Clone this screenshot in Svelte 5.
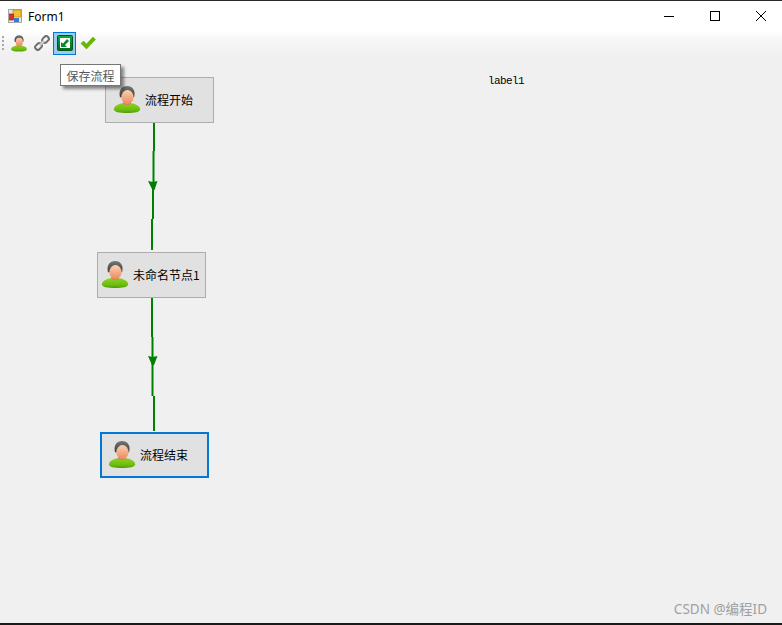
<script>
    const nodes = [
        { label: "流程开始", x: 105, y: 22, w: 109, h: 46, px: 6, gap: 3 },
        { label: "未命名节点1", x: 97, y: 197, w: 109, h: 46, px: 2, gap: 3 },
        { label: "流程结束", x: 100, y: 377, w: 109, h: 46, px: 5, gap: 3, selected: true }
    ];

    // each link is drawn in slightly offset pieces, like the hand-dragged lines
    const lines = [
        "M154 68V96 M153.5 96V134 M153 134V164 M152 164V195",
        "M152 243V282 M152.5 282V341 M154 341V376"
    ];
    const arrows = [
        "148,126 153,127 157.5,126 154.5,135 152.5,135",
        "148,301 152.5,302 157.5,301 154,310 152,310"
    ];
</script>

{#snippet person(size)}
    <svg class="person" width={size} height={size} viewBox="0 0 32 32">
        <defs>
            <linearGradient id="body" x1="0" y1="0" x2="0" y2="1">
                <stop offset="0" stop-color="#8fd420" />
                <stop offset="0.7" stop-color="#6cbc10" />
                <stop offset="1" stop-color="#4f9a08" />
            </linearGradient>
            <linearGradient id="face" x1="0" y1="0" x2="0" y2="1">
                <stop offset="0" stop-color="#fcd0b0" />
                <stop offset="1" stop-color="#ea8a62" />
            </linearGradient>
            <linearGradient id="hair" x1="0" y1="0" x2="0" y2="1">
                <stop offset="0" stop-color="#777" />
                <stop offset="1" stop-color="#3c3c3c" />
            </linearGradient>
        </defs>
        <path d="M2 27c0-4 7-7 14-7s14 3 14 7c0 3-6 4-14 4S2 30 2 27z" fill="url(#body)" />
        <path d="M12 17h8v4c-1 2-7 2-8 0z" fill="#d8805a" />
        <path d="M8.5 14C6.5 6 11 2 16 2c6 0 9.500 5 7.500 12z" fill="url(#hair)" />
        <ellipse cx="16.500" cy="14" rx="6.500" ry="7.500" fill="url(#face)" />
    </svg>
{/snippet}

<div class="window">
    <header class="titlebar">
        <svg class="app-icon" width="14" height="14" viewBox="0 0 14 14">
            <rect x="0.5" y="0.5" width="13" height="13" fill="#e4e4e4" stroke="#a8a8a8" />
            <rect x="5" y="1" width="8" height="7" fill="#f2c230" stroke="#b08410" stroke-width="0.6" />
            <rect x="1.5" y="5" width="4" height="6" fill="#d8322a" stroke="#8c1c18" stroke-width="0.6" />
            <rect x="6" y="9" width="5" height="4" fill="#3c78d8" />
        </svg>
        <span class="title">Form1</span>
        <div class="controls">
            <span class="ctl">
                <svg width="12" height="12" viewBox="0 0 12 12"><path d="M1 6.5H11" stroke="#000" /></svg>
            </span>
            <span class="ctl">
                <svg width="12" height="12" viewBox="0 0 12 12"><rect x="1.5" y="1.5" width="9" height="9" fill="none" stroke="#000" /></svg>
            </span>
            <span class="ctl">
                <svg width="12" height="12" viewBox="0 0 12 12"><path d="M1 1L11 11M11 1L1 11" stroke="#000" /></svg>
            </span>
        </div>
    </header>

    <nav class="toolbar">
        <span class="grip"></span>
        <button class="tool" type="button">{@render person(18)}</button>
        <button class="tool" type="button">
            <svg width="16" height="16" viewBox="0 0 16 16">
                <g fill="none" stroke="#6e6e6e" stroke-width="2">
                    <rect x="9" y="1" width="5" height="7" rx="2.2" transform="rotate(45 11.5 4.5)" />
                    <rect x="2" y="8" width="5" height="7" rx="2.2" transform="rotate(45 4.5 11.5)" />
                </g>
                <path d="M6 10L10 6" stroke="#b4b4b4" stroke-width="3" />
                <path d="M6.500 9.500L9.500 6.500" stroke="#e8e8e8" stroke-width="1" />
            </svg>
        </button>
        <button class="tool active" type="button">
            <svg width="16" height="16" viewBox="0 0 16 16">
                <defs>
                    <linearGradient id="save" x1="0" y1="0" x2="0" y2="1">
                        <stop offset="0" stop-color="#12a83a" />
                        <stop offset="1" stop-color="#046a1e" />
                    </linearGradient>
                </defs>
                <rect x="0.5" y="0.5" width="15" height="15" rx="1" fill="url(#save)" stroke="#05581a" />
                <rect x="3" y="3" width="10" height="10" fill="#fff" />
                <path d="M4 12V7l2 1.500L10 4l2 2-4 4 2 2z" fill="#0a8a2a" />
            </svg>
        </button>
        <button class="tool" type="button">
            <svg width="16" height="14" viewBox="0 0 16 14">
                <path d="M1 7.500L3.500 5l3 3L13 1l2.500 2.500L6.500 13z" fill="#68b800" stroke="#58a404" stroke-width="0.5" />
            </svg>
        </button>
    </nav>

    <main class="canvas">
        <svg class="links" width="782" height="570">
            {#each lines as d}
                <path {d} fill="none" stroke="#008000" stroke-width="2" />
            {/each}
            {#each arrows as points}
                <polygon {points} fill="#008000" />
            {/each}
        </svg>

        {#each nodes as node}
            <div
                class="node"
                class:selected={node.selected}
                style="left: {node.x}px; top: {node.y}px; width: {node.w}px; height: {node.h}px; padding-left: {node.px}px; gap: {node.gap}px;"
            >
                {@render person(30)}
                <span>{node.label}</span>
            </div>
        {/each}

        <span class="label">label1</span>
        <div class="tooltip">保存流程</div>
        <span class="watermark">CSDN @编程ID</span>
    </main>
</div>

<style>
    :global(body) {
        background: #f0f0f0;
    }

    .window {
        width: 782px;
        height: 625px;
        display: flex;
        flex-direction: column;
        box-sizing: border-box;
        border-top: 1px solid #2a2a2a;
        border-bottom: 2px solid #1a1a1a;
        font-family: "Noto Sans", "Noto Sans CJK SC", sans-serif;
        overflow: hidden;
    }

    .titlebar {
        height: 30px;
        flex: none;
        display: flex;
        align-items: center;
        background: #fff;
        padding-left: 8px;
    }

    .app-icon {
        margin-right: 6px;
    }

    .title {
        font-size: 12px;
        color: #000;
    }

    .controls {
        margin-left: auto;
        margin-right: -2px;
        display: flex;
    }

    .ctl {
        width: 46px;
        height: 30px;
        display: flex;
        align-items: center;
        justify-content: center;
    }

    .toolbar {
        height: 24px;
        flex: none;
        display: flex;
        align-items: center;
        padding-left: 2px;
        background: linear-gradient(#ffffff, #f8f8f8 30%, #f0f0f0);
    }

    .grip {
        width: 2px;
        height: 15px;
        margin-right: 3px;
        background: repeating-linear-gradient(#a8a8a8 0 2px, transparent 2px 4px);
    }

    .tool {
        width: 23px;
        height: 23px;
        padding: 0;
        border: 1px solid transparent;
        background: none;
        display: flex;
        align-items: center;
        justify-content: center;
        box-sizing: border-box;
    }

    .tool.active {
        border-color: #0078d7;
        background: #9ccbf2;
    }

    .canvas {
        flex: 1;
        position: relative;
        background: #f0f0f0;
    }

    .links {
        position: absolute;
        left: 0;
        top: 0;
    }

    .node {
        position: absolute;
        box-sizing: border-box;
        display: flex;
        align-items: center;
        padding-bottom: 2px;
        background: #e1e1e1;
        border: 1px solid #adadad;
        font-family: "Noto Sans CJK SC", sans-serif;
        font-size: 12px;
        color: #000;
        white-space: nowrap;
    }

    .node.selected {
        border: 2px solid #0078d7;
    }

    .person {
        flex: none;
    }

    .label {
        position: absolute;
        left: 488px;
        top: 20px;
        font-family: "Liberation Mono", monospace;
        font-size: 11px;
        letter-spacing: -0.6px;
        line-height: 12px;
        color: #000;
    }

    .tooltip {
        position: absolute;
        left: 60px;
        top: 9px;
        width: 61px;
        height: 22px;
        box-sizing: border-box;
        display: flex;
        align-items: center;
        justify-content: center;
        background: #fff;
        border: 1px solid #767676;
        box-shadow: 3px 3px 3px rgba(0, 0, 0, 0.45);
        font-family: "Noto Sans CJK SC", sans-serif;
        font-size: 12px;
        color: #575757;
    }

    .watermark {
        position: absolute;
        right: 15px;
        top: 546px;
        font-size: 13.5px;
        line-height: 16px;
        color: #a0a0a0;
    }
</style>
